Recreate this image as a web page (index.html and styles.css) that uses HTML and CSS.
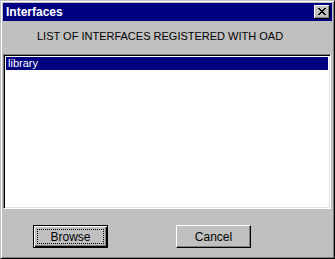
FILE: index.html
```html
<!DOCTYPE html>
<html>
<head>
<meta charset="utf-8">
<link rel="stylesheet" href="styles.css">
</head>
<body>
<div class="window">
  <div class="titlebar">
    <span class="title">Interfaces</span>
    <span class="close"><svg width="8" height="7" viewBox="0 0 8 7"><path d="M0 0h2v1h1v1h2v-1h1v-1h2v1h-1v1h-1v1h-1v1h1v1h1v1h1v1h-2v-1h-1v-1h-2v1h-1v1h-2v-1h1v-1h1v-1h1v-1h-1v-1h-1v-1h-1z" fill="#000"/></svg></span>
  </div>
  <div class="header">LIST OF INTERFACES REGISTERED WITH OAD</div>
  <div class="listbox">
    <div class="item selected">library</div>
  </div>
  <div class="buttons">
    <button class="btn default"><span class="focus">Browse</span></button>
    <button class="btn">Cancel</button>
  </div>
</div>
</body>
</html>
```

FILE: styles.css
```css
html, body {
  margin: 0;
  padding: 0;
  background: #c0c0c0;
}
.window {
  box-sizing: border-box;
  width: 335px;
  height: 259px;
  background: #c0c0c0;
  border: 1px solid;
  border-color: #c0c0c0 #000 #000 #c0c0c0;
  box-shadow: inset 1px 1px #fff, inset -1px -1px #808080;
  padding: 2px;
  display: flex;
  flex-direction: column;
  font-family: "Liberation Sans", Arial, sans-serif;
  font-size: 11px;
  color: #000;
}
.titlebar {
  height: 18px;
  background: #000080;
  display: flex;
  align-items: center;
  justify-content: space-between;
  padding: 0 2px 0 3px;
}
.title {
  color: #fff;
  font-weight: bold;
  font-size: 12px;
}
.close {
  box-sizing: border-box;
  width: 16px;
  height: 14px;
  background: #c0c0c0;
  border-right: 1px solid #000;
  border-bottom: 1px solid #000;
  box-shadow: inset 1px 1px #fff, inset -1px -1px #808080;
  display: flex;
  align-items: center;
  justify-content: center;
  padding: 0 0 0 1px;
}
.close svg { display: block; }
.header {
  height: 33px;
  box-sizing: border-box;
  padding: 8px 0 0 34px;
  font-size: 11px;
  line-height: 14px;
}
.listbox {
  box-sizing: border-box;
  height: 155px;
  background: #fff;
  border: 1px solid;
  border-color: #808080 #fff #fff #808080;
  box-shadow: inset 1px 1px #000, inset -1px -1px #dfdfdf;
  padding: 2px;
  margin-right: 1px;
}
.item {
  height: 13px;
  line-height: 13px;
  padding-left: 2px;
  font-size: 11px;
}
.selected {
  background: #000080;
  color: #fff;
}
.buttons {
  display: flex;
  padding: 16px 0 0 30px;
  gap: 68px;
}
.btn {
  box-sizing: border-box;
  width: 75px;
  height: 23px;
  margin: 0;
  padding: 0;
  background: #c0c0c0;
  font-family: "Liberation Sans", Arial, sans-serif;
  font-size: 12px;
  color: #000;
  border: 1px solid;
  border-color: #fff #000 #000 #fff;
  box-shadow: inset -1px -1px #808080;
  display: flex;
  align-items: center;
  justify-content: center;
}
.btn.default {
  border: 1px solid #000;
  box-shadow: inset 1px 1px #fff, inset -1px -1px #000, inset -2px -2px #808080;
  padding: 3px;
}
.focus {
  box-sizing: border-box;
  width: 100%;
  height: 100%;
  border: 1px dotted #000;
  display: flex;
  align-items: center;
  justify-content: center;
}
```
